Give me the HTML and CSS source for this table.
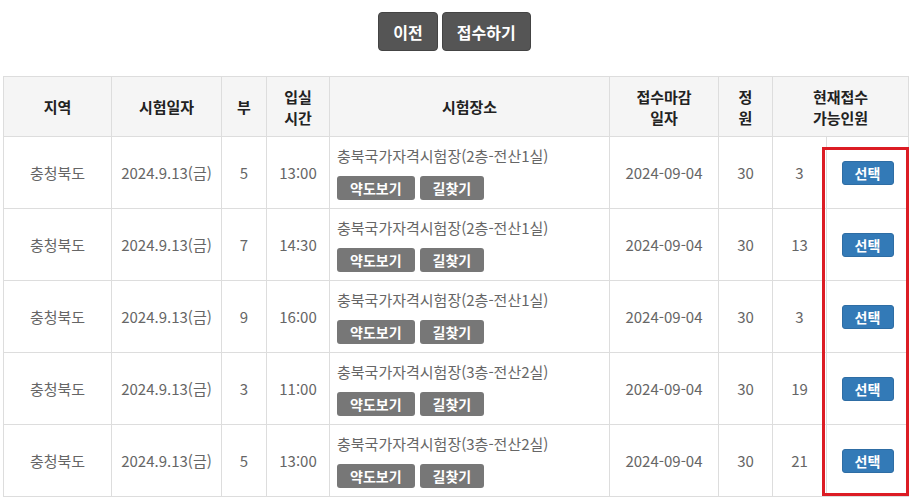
FILE: index.html
```html
<!DOCTYPE html>
<html lang="ko">
<head>
<meta charset="utf-8">
<link rel="stylesheet" href="styles.css">
</head>
<body>
<div class="page">
  <div class="top-actions">
    <button class="btn-dark">이전</button>
    <button class="btn-dark">접수하기</button>
  </div>
  <div class="table-wrap">
    <table class="exam-table">
      <colgroup>
        <col class="c-region"><col class="c-date"><col class="c-part"><col class="c-time">
        <col class="c-place"><col class="c-deadline"><col class="c-cap"><col class="c-left"><col class="c-btn">
      </colgroup>
      <thead>
        <tr>
          <th>지역</th>
          <th>시험일자</th>
          <th>부</th>
          <th>입실<br>시간</th>
          <th>시험장소</th>
          <th>접수마감<br>일자</th>
          <th>정<br>원</th>
          <th colspan="2">현재접수<br>가능인원</th>
        </tr>
      </thead>
      <tbody>
        <tr>
          <td>충청북도</td><td>2024.9.13(금)</td><td>5</td><td>13:00</td>
          <td class="place"><div class="place-name">충북국가자격시험장(2층-전산1실)</div><div class="place-btns"><button class="btn-gray">약도보기</button><button class="btn-gray">길찾기</button></div></td>
          <td>2024-09-04</td><td>30</td><td>3</td><td><button class="btn-blue">선택</button></td>
        </tr>
        <tr>
          <td>충청북도</td><td>2024.9.13(금)</td><td>7</td><td>14:30</td>
          <td class="place"><div class="place-name">충북국가자격시험장(2층-전산1실)</div><div class="place-btns"><button class="btn-gray">약도보기</button><button class="btn-gray">길찾기</button></div></td>
          <td>2024-09-04</td><td>30</td><td>13</td><td><button class="btn-blue">선택</button></td>
        </tr>
        <tr>
          <td>충청북도</td><td>2024.9.13(금)</td><td>9</td><td>16:00</td>
          <td class="place"><div class="place-name">충북국가자격시험장(2층-전산1실)</div><div class="place-btns"><button class="btn-gray">약도보기</button><button class="btn-gray">길찾기</button></div></td>
          <td>2024-09-04</td><td>30</td><td>3</td><td><button class="btn-blue">선택</button></td>
        </tr>
        <tr>
          <td>충청북도</td><td>2024.9.13(금)</td><td>3</td><td>11:00</td>
          <td class="place"><div class="place-name">충북국가자격시험장(3층-전산2실)</div><div class="place-btns"><button class="btn-gray">약도보기</button><button class="btn-gray">길찾기</button></div></td>
          <td>2024-09-04</td><td>30</td><td>19</td><td><button class="btn-blue">선택</button></td>
        </tr>
        <tr>
          <td>충청북도</td><td>2024.9.13(금)</td><td>5</td><td>13:00</td>
          <td class="place"><div class="place-name">충북국가자격시험장(3층-전산2실)</div><div class="place-btns"><button class="btn-gray">약도보기</button><button class="btn-gray">길찾기</button></div></td>
          <td>2024-09-04</td><td>30</td><td>21</td><td><button class="btn-blue">선택</button></td>
        </tr>
      </tbody>
    </table>
    <div class="highlight"></div>
  </div>
</div>
</body>
</html>
```
FILE: styles.css
```css
html, body {
  margin: 0;
  padding: 0;
  background: #fff;
  overflow: hidden;
}
body {
  font-family: "Noto Sans CJK KR", "Noto Sans", sans-serif;
  color: #666;
  width: 909px;
  height: 497px;
}
.page {
  padding-top: 12px;
}
.top-actions {
  display: flex;
  justify-content: center;
  gap: 4px;
}
button {
  font-family: inherit;
  border: none;
  cursor: pointer;
}
.btn-dark {
  height: 39px;
  padding: 0 14px;
  background: #555;
  border: 1px solid #444;
  border-radius: 4px;
  color: #fff;
  font-size: 16px;
  font-weight: bold;
  line-height: 1;
}
.table-wrap {
  position: relative;
  margin-top: 25px;
  margin-left: 3px;
  width: 905px;
}
.exam-table {
  width: 905px;
  border-collapse: collapse;
  table-layout: fixed;
  font-size: 15px;
}
.c-region { width: 108px; }
.c-date { width: 110px; }
.c-part { width: 45px; }
.c-time { width: 63px; }
.c-place { width: 280px; }
.c-deadline { width: 109px; }
.c-cap { width: 54px; }
.c-left { width: 54px; }
.c-btn { width: 82px; }
.exam-table th,
.exam-table td {
  border: 1px solid #ddd;
  text-align: center;
  vertical-align: middle;
  padding: 0;
}
.exam-table th {
  height: 59px;
  background: #f5f5f5;
  color: #222;
  font-weight: bold;
  line-height: 21px;
}
.exam-table td {
  height: 71px;
  line-height: 22px;
}
.exam-table td.place {
  text-align: left;
  padding-left: 7px;
}
.place-name {
  margin-bottom: 9px;
}
.place-btns {
  display: flex;
  gap: 5px;
}
.btn-gray {
  height: 24px;
  padding: 0 13px;
  background: #777;
  border-radius: 3px;
  color: #fff;
  font-size: 14px;
  font-weight: bold;
  line-height: 24px;
}
.btn-blue {
  height: 24px;
  width: 52px;
  padding: 0;
  background: #337ab7;
  border: 1px solid #2e6da4;
  border-radius: 3px;
  color: #fff;
  font-size: 14px;
  font-weight: bold;
  line-height: 22px;
}
.highlight {
  position: absolute;
  left: 819px;
  top: 71px;
  width: 81px;
  height: 343px;
  border: 3px solid #dc1c24;
  pointer-events: none;
}
```
